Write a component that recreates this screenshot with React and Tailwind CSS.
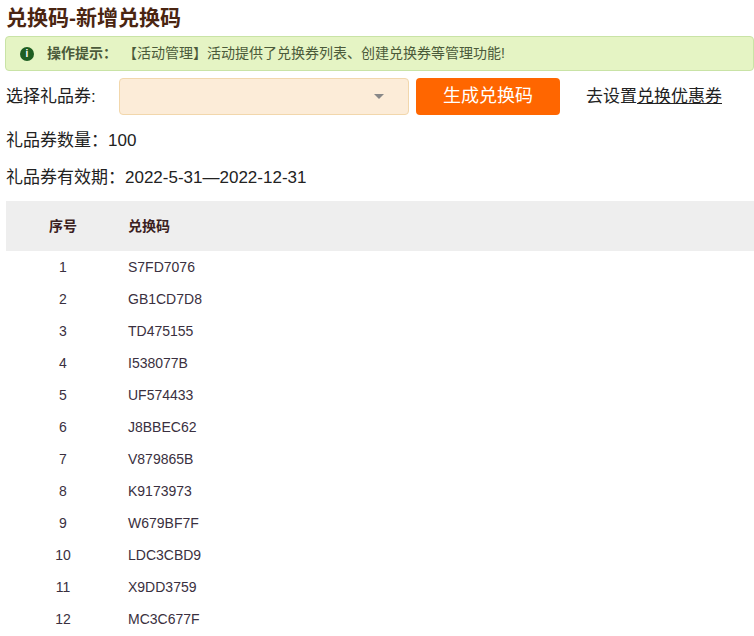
const codes = ["S7FD7076","GB1CD7D8","TD475155","I538077B","UF574433","J8BBEC62","V879865B","K9173973","W679BF7F","LDC3CBD9","X9DD3759","MC3C677F"];

export default function App() {
  return (
    <div className="w-[754px] h-[636px] overflow-hidden bg-white text-[#333]" style={{ fontFamily: '"Liberation Sans", "Noto Sans CJK SC", sans-serif' }}>
      <h1 className="pl-[6px] h-[36px] leading-[36px] text-[21px] font-bold text-[#4a2511]">兑换码-新增兑换码</h1>
      <div className="ml-[5px] h-[35px] flex items-center bg-[#e5f4c4] border border-[#c9e3a6] rounded-sm text-[14px] text-[#4b5a3a]">
        <span className="ml-[14px] w-[14px] h-[14px] rounded-full bg-[#1e5e22] text-white text-[10px] font-bold flex items-center justify-center">i</span>
        <span className="ml-[13px] font-bold">操作提示：</span>
        <span className="ml-[6px]">【活动管理】活动提供了兑换券列表、创建兑换券等管理功能!</span>
      </div>
      <div className="flex items-center h-[43px] mt-[4px] text-[17px] text-[#222]">
        <span className="pl-[6px] w-[119px]">选择礼品券:</span>
        <div className="w-[290px] h-[37px] bg-[#fcecd8] border border-[#f2d7ac] rounded-sm flex items-center justify-end pr-[24px]">
          <span className="w-0 h-0 border-l-[5px] border-r-[5px] border-t-[5px] border-l-transparent border-r-transparent border-t-[#888]"></span>
        </div>
        <button className="ml-[7px] w-[144px] h-[37px] bg-[#ff6600] rounded-sm text-white text-[18px]">生成兑换码</button>
        <span className="ml-[26px]">去设置<span className="underline">兑换优惠券</span></span>
      </div>
      <div className="pl-[6px] mt-[11px] text-[17px] text-[#222] leading-[24px]">礼品券数量：100</div>
      <div className="pl-[6px] mt-[13px] text-[17px] text-[#222] leading-[24px]">礼品券有效期：2022-5-31—2022-12-31</div>
      <div className="ml-[6px] mt-[11px]">
        <div className="flex h-[50px] items-center bg-[#eeeeee] text-[14px] font-bold text-[#3a2020]">
          <span className="w-[114px] text-center">序号</span>
          <span className="ml-[8px]">兑换码</span>
        </div>
        {codes.map((c, i) => (
          <div key={c} className="flex h-[32px] items-center text-[14px] text-[#3a3040]">
            <span className="w-[114px] text-center">{i + 1}</span>
            <span className="ml-[8px]">{c}</span>
          </div>
        ))}
      </div>
    </div>
  );
}
